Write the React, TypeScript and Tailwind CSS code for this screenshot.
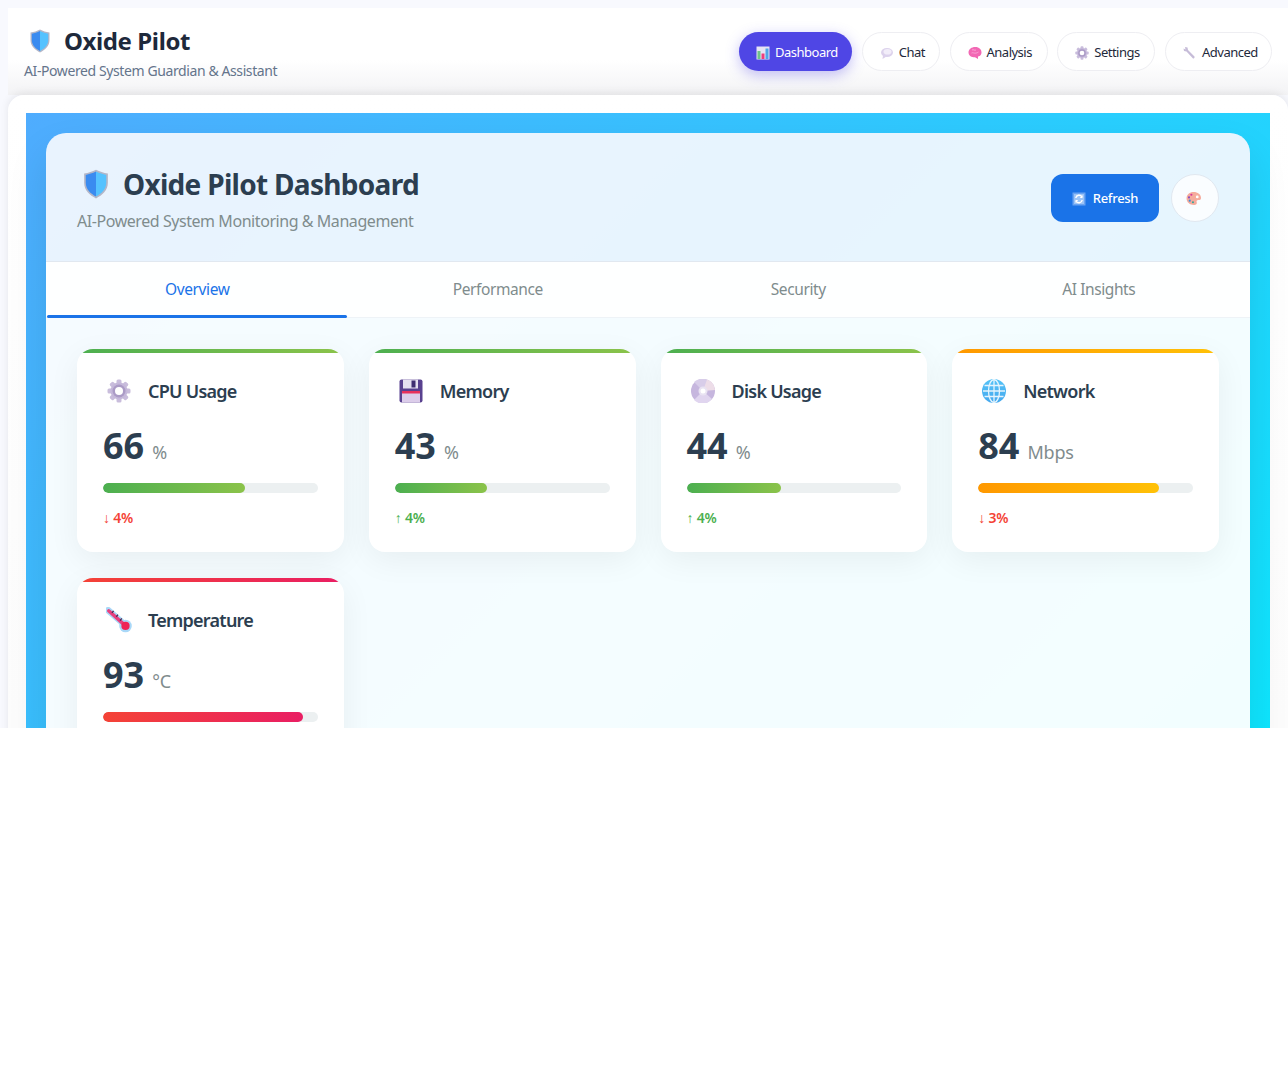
import React from "react";

const sans = "font-['Noto_Sans','Open_Sans',sans-serif]";

function Shield({ size = 24 }: { size?: number }) {
  return (
    <svg width={size} height={size} viewBox="0 0 24 24">
      <path d="M12 0.500 C15 2 18 3 21.500 3.500 V11 C21.500 17 17 21 12 23.500 C7 21 2.500 17 2.500 11 V3.500 C6 3 9 2 12 0.500 Z" fill="#b3b6c8" />
      <path d="M12 2 C9 3.400 6.500 4.200 3.800 4.700 V11 C3.800 16.200 7.700 19.800 12 22 Z" fill="#3a8bf0" />
      <path d="M12 2 C15 3.400 17.500 4.200 20.200 4.700 V11 C20.200 16.200 16.300 19.800 12 22 Z" fill="#55c2ff" />
    </svg>
  );
}

function Gear({ size = 24 }: { size?: number }) {
  const teeth = [0, 45, 90, 135, 180, 225, 270, 315];
  return (
    <svg width={size} height={size} viewBox="0 0 24 24">
      {teeth.map((a) => (
        <rect key={a} x="9.500" y="0.500" width="5" height="6" rx="1.500" fill="#c9bddc" transform={`rotate(${a} 12 12)`} />
      ))}
      <circle cx="12" cy="12" r="8.500" fill="#c5b8da" />
      <circle cx="12" cy="12" r="6.500" fill="#ab9bc6" />
      <circle cx="12" cy="12" r="4" fill="#ffffff" />
    </svg>
  );
}

function Chart({ size = 14 }: { size?: number }) {
  return (
    <svg width={size} height={size} viewBox="0 0 14 14">
      <rect x="0.500" y="0.500" width="13" height="13" fill="#e6e4f4" />
      <rect x="1.500" y="5" width="3" height="8" fill="#6fc28a" />
      <rect x="5.500" y="7.500" width="3" height="5.500" fill="#ee3f7c" />
      <rect x="9.500" y="2.500" width="3" height="10.500" fill="#4fa6e8" />
    </svg>
  );
}

function Speech({ size = 14 }: { size?: number }) {
  return (
    <svg width={size} height={size} viewBox="0 0 14 14">
      <ellipse cx="7" cy="6.500" rx="6" ry="4.500" fill="#dcd2ec" />
      <path d="M3 9.500 L2.500 13 L6.500 10.500 Z" fill="#dcd2ec" />
      <ellipse cx="7.500" cy="5.800" rx="4" ry="2.800" fill="#f2edf9" />
    </svg>
  );
}

function Brain({ size = 14 }: { size?: number }) {
  return (
    <svg width={size} height={size} viewBox="0 0 14 14">
      <path d="M0.500 6.500 C0.500 3 4 0.800 7.500 1 C11 1 13.800 3.500 13.500 7 C13.300 9.500 11 10.500 10 10.500 L10 13 L7 11.300 C3.500 11.300 0.700 10 0.500 6.500 Z" fill="#f268b4" />
      <path d="M4 4 C5.500 3 6.500 5 8 4 M3.500 7 C5 6 7 8.500 10.500 6" stroke="#f9a3d4" strokeWidth="1" fill="none" />
    </svg>
  );
}

function Wrench({ size = 14 }: { size?: number }) {
  return (
    <svg width={size} height={size} viewBox="0 0 14 14">
      <path d="M2 1 L4.500 1.500 L5 4 L11.500 10.500 A1.500 1.500 0 0 1 10 12.500 L3.500 5.500 L1 5 L0.500 2.500 L2.500 3.500 Z" fill="#c6bcd8" />
    </svg>
  );
}

function Floppy({ size = 24 }: { size?: number }) {
  return (
    <svg width={size} height={size} viewBox="0 0 24 24">
      <rect x="0.500" y="0.500" width="23" height="23" rx="2" fill="#59418f" />
      <rect x="4" y="0.500" width="15" height="9" fill="#e6e0f0" />
      <rect x="12.500" y="1.500" width="4" height="7" fill="#3f2e70" />
      <rect x="3" y="12" width="18" height="11.500" fill="#dccdea" />
      <rect x="3" y="12" width="18" height="2.500" fill="#e8315c" />
    </svg>
  );
}

function Disc({ size = 24 }: { size?: number }) {
  return (
    <svg width={size} height={size} viewBox="0 0 24 24">
      <circle cx="12" cy="12" r="12" fill="#c6b6de" />
      <path d="M12 12 L3 3 A12 12 0 0 1 22 6 Z" fill="#d8cde9" />
      <path d="M12 12 L3 21 A12 12 0 0 0 21 20 Z" fill="#e0d5ef" />
      <path d="M12 12 L16 0.500 A12 12 0 0 1 24 11 Z" fill="#eddde8" />
      <circle cx="12" cy="12" r="4.500" fill="#e9e3f2" />
      <circle cx="12" cy="12" r="2.500" fill="#ffffff" />
    </svg>
  );
}

function Globe({ size = 24 }: { size?: number }) {
  return (
    <svg width={size} height={size} viewBox="0 0 24 24">
      <defs>
        <linearGradient id="globeFill" x1="0" y1="0" x2="0" y2="1">
          <stop offset="0" stopColor="#55c3f7" />
          <stop offset="1" stopColor="#45a8ee" />
        </linearGradient>
      </defs>
      <circle cx="12" cy="12" r="12" fill="url(#globeFill)" />
      <g stroke="#e4f4fd" strokeWidth="1.300" fill="none">
        <ellipse cx="12" cy="12" rx="5.500" ry="11.500" />
        <path d="M12 0.500 V23.500 M1 12 H23 M2.500 6.500 H21.500 M2.500 17.500 H21.500" />
      </g>
    </svg>
  );
}

function Thermometer({ size = 26 }: { size?: number }) {
  return (
    <svg width={size} height={size} viewBox="0 0 24 24">
      <path d="M2 3 L18 17" stroke="#a9d8f8" strokeWidth="6" strokeLinecap="round" />
      <circle cx="18" cy="17.500" r="5.800" fill="#a9d8f8" />
      <path d="M2.500 3.500 L17 16.500" stroke="#e8407f" strokeWidth="3.200" strokeLinecap="round" />
      <circle cx="18" cy="17.500" r="3.800" fill="#ee2457" />
      <path d="M7 3.500 L5.500 5.500 M11 7 L9.500 9 M14.500 10.500 L13 12.500" stroke="#4b2a52" strokeWidth="1.200" />
    </svg>
  );
}

function RefreshIcon() {
  return (
    <svg width="14" height="14" viewBox="0 0 14 14">
      <rect x="0.500" y="0.500" width="13" height="13" fill="#6aa4f2" />
      <rect x="2" y="2" width="10" height="10" fill="#9cc4f7" />
      <path d="M10 5 A3.300 3.300 0 0 0 3.800 6 M4 9 A3.300 3.300 0 0 0 10.200 8" stroke="#ffffff" strokeWidth="1.400" fill="none" />
      <path d="M10.500 3 V6 H7.800 M3.500 11 V8 H6.200" fill="#ffffff" />
    </svg>
  );
}

function Palette() {
  return (
    <svg width="15" height="15" viewBox="0 0 14 14">
      <path d="M7 1 C11 1 14 3.500 14 6.500 C14 8 13 8.500 11.500 8.500 C10 8.500 9.500 9.500 10 10.500 C10.500 12 9.500 13 7.500 13 C3.500 13 0.500 10.500 0.500 7 C0.500 3.500 3.500 1 7 1 Z" fill="#f5ab9c" />
      <circle cx="5" cy="3.500" r="1" fill="#d4359c" />
      <circle cx="2.800" cy="6" r="1" fill="#8b4fc0" />
      <circle cx="3.500" cy="9" r="1" fill="#3f8fd8" />
      <circle cx="6.500" cy="10.500" r="1" fill="#3aa89a" />
      <circle cx="10.500" cy="5.500" r="1.300" fill="#ffffff" />
    </svg>
  );
}

const nav = [
  { label: "Dashboard", icon: <Chart />, width: "w-[113px]", active: true },
  { label: "Chat", icon: <Speech />, width: "w-[78px]" },
  { label: "Analysis", icon: <Brain />, width: "w-[98px]" },
  { label: "Settings", icon: <Gear size={14} />, width: "w-[98px]" },
  { label: "Advanced", icon: <Wrench />, width: "w-[107px]" },
];

const tabs = ["Overview", "Performance", "Security", "AI Insights"];

const green = "bg-[linear-gradient(90deg,#4caf50,#8bc34a)]";
const orange = "bg-[linear-gradient(90deg,#ff9800,#ffc107)]";
const red = "bg-[linear-gradient(90deg,#f44336,#e91e63)]";

const metrics = [
  { title: "CPU Usage", icon: <Gear />, value: 66, unit: "%", change: "↓ 4%", up: false, tone: green },
  { title: "Memory", icon: <Floppy />, value: 43, unit: "%", change: "↑ 4%", up: true, tone: green },
  { title: "Disk Usage", icon: <Disc />, value: 44, unit: "%", change: "↑ 4%", up: true, tone: green },
  { title: "Network", icon: <Globe />, value: 84, unit: "Mbps", change: "↓ 3%", up: false, tone: orange },
  // the change line of this card falls below the clipped part of the page
  { title: "Temperature", icon: <Thermometer />, value: 93, unit: "°C", change: "", up: false, tone: red },
];

function MetricCard({ m }: { m: (typeof metrics)[number] }) {
  return (
    <div className="relative overflow-hidden rounded-2xl bg-white px-[26px] pt-[30px] pb-[24px] shadow-[0_8px_32px_rgba(0,0,0,0.06)]">
      <div className={`absolute top-0 left-0 h-1 w-full ${m.tone}`} />
      <div className="flex h-6 items-center gap-[13px]">
        <div className="flex w-[32px] justify-center">{m.icon}</div>
        <div className="text-[18px] font-semibold tracking-[-0.75px] text-[#2c3e50]">{m.title}</div>
      </div>
      <div className="mt-[19px] flex h-[48px] items-baseline gap-2">
        <span className="text-[36px] leading-[48px] font-bold text-[#2c3e50]">{m.value}</span>
        <span className="text-[18px] tracking-[-0.2px] text-[#7f8c8d]">{m.unit}</span>
      </div>
      <div className="mt-[13px] h-2.5 overflow-hidden rounded-full bg-[#ecf0f1]">
        <div className={`h-full rounded-full ${m.tone}`} style={{ width: `${m.value}%` }} />
      </div>
      <div className={`mt-[15px] h-5 text-[14px] leading-5 font-semibold tracking-[-0.2px] ${m.up ? "text-[#4caf50]" : "text-[#f44336]"}`}>
        {m.change}
      </div>
    </div>
  );
}

export default function App() {
  return (
    <div className={`${sans} h-[728px] overflow-hidden bg-[#f8f9fe] pt-2 pl-2`}>
      <header className="flex h-[87px] items-start justify-between bg-gradient-to-b from-white from-60% to-[#f3f3f5] pr-4 pl-4">
        <div>
          <div className="mt-[19px] flex h-[28px] items-center gap-3 pl-1">
            <Shield />
            <h1 className="text-[24px] font-bold tracking-[-0.4px] text-[#1e293b]">Oxide Pilot</h1>
          </div>
          <p className="mt-[6px] text-[14px] leading-5 tracking-[-0.4px] text-[#64748b]">AI-Powered System Guardian &amp; Assistant</p>
        </div>
        <nav className="mt-6 flex gap-[9.75px]">
          {nav.map((n) => (
            <button
              key={n.label}
              className={`flex h-[39px] items-center gap-[5px] rounded-[20px] pt-[2px] pl-[17px] text-[13px] tracking-[-0.5px] ${n.width} ${
                n.active
                  ? "bg-[#4f46e5] text-white shadow-[0_4px_14px_rgba(79,70,229,0.35)]"
                  : "border border-[#eeeef2] bg-white text-[#1e293b]"
              }`}
            >
              {n.icon}
              {n.label}
            </button>
          ))}
        </nav>
      </header>

      <main className="relative rounded-t-2xl bg-gradient-to-b from-white to-[#fafafa] p-[18px] shadow-[0_-2px_8px_rgba(0,0,0,0.08)]">
        <div className="min-h-[1018px] bg-[linear-gradient(135deg,#4facfe_0%,#00f2fe_100%)] p-5">
          <div className="overflow-hidden rounded-[20px] bg-white/95 shadow-[0_20px_40px_rgba(0,0,0,0.1)]">
            <div className="flex h-[129px] items-center justify-between border-b border-[#e1e8f0] bg-[#1a73e8]/6 px-[31px]">
              <div className="pt-[5px]">
                <div className="flex items-center gap-3 pl-1">
                  <Shield size={30} />
                  <h2 className="text-[28px] leading-9 font-bold tracking-[-0.7px] text-[#2c3e50]">Oxide Pilot Dashboard</h2>
                </div>
                <p className="mt-[7px] text-[16px] leading-6 tracking-[-0.44px] text-[#7f8c8d]">AI-Powered System Monitoring &amp; Management</p>
              </div>
              <div className="mt-[2px] flex items-center gap-3">
                <button className="flex h-12 w-[108px] items-center justify-center gap-[7px] rounded-xl bg-[#1a73e8] pt-px text-[13px] font-medium tracking-[-0.3px] text-white">
                  <RefreshIcon />
                  Refresh
                </button>
                <button className="flex h-12 w-12 items-center justify-center rounded-full border border-[#e1e8f0] bg-white/80 pr-1">
                  <Palette />
                </button>
              </div>
            </div>

            <div className="grid h-[56px] grid-cols-4 border-b border-[#eef3f7] bg-white/90 px-px">
              {tabs.map((t, i) => (
                <div
                  key={t}
                  className={`relative flex items-center justify-center text-[15.5px] tracking-[-0.4px] ${
                    i === 0 ? "text-[#1a73e8]" : "text-[#7f8c8d]"
                  }`}
                >
                  {t}
                  {i === 0 && <div className="absolute right-px -bottom-px left-0 h-[3px] rounded-full bg-[#1a73e8]" />}
                </div>
              ))}
            </div>

            <div className="grid grid-cols-4 gap-x-[25px] gap-y-[26px] px-[31px] py-[31px]">
              {metrics.map((m) => (
                <MetricCard key={m.title} m={m} />
              ))}
            </div>
          </div>
        </div>
      </main>
    </div>
  );
}
